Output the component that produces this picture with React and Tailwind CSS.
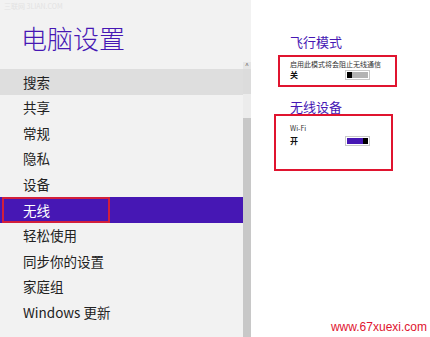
import React from 'react';

const menuItems = ['搜索', '共享', '常规', '隐私', '设备', '无线', '轻松使用', '同步你的设置', '家庭组', 'Windows 更新'];

const font = { fontFamily: '"Noto Sans CJK SC", "Noto Sans", sans-serif' };

const Toggle = ({ on }) => (
  <div className="flex h-[10px] w-[25px] border border-[#c9c9c9] bg-white p-[1px]">
    {on ? (
      <>
        <div className="flex-1 bg-[#4617b4]" />
        <div className="w-[5px] bg-black" />
      </>
    ) : (
      <>
        <div className="w-[5px] bg-black" />
        <div className="flex-1 bg-[#b3b3b3]" />
      </>
    )}
  </div>
);

const App = () => {
  return (
    <div className="flex h-[337px] w-[430px] overflow-hidden bg-white" style={font}>
      <div className="flex w-[251px] bg-[#f2f2f2]">
        <div className="flex w-[243px] flex-col">
          <div className="h-[23px] pl-[4px] pt-[2px] text-[7px] leading-[9px] text-[#e2e2e2]">三联网 3LIAN.COM</div>
          <h1 className="pl-[21px] text-[26px] font-light leading-[30px] text-[#4617b4]">电脑设置</h1>
          <div className="h-[16px]" />
          {menuItems.map((item) => {
            const selected = item === '无线';
            const hover = item === '搜索';
            return (
              <div
                key={item}
                className={`relative flex h-[25.6px] items-center pl-[23px] text-[13.5px] ${
                  selected ? 'bg-[#4617b4] text-white' : hover ? 'bg-[#dedede] text-[#222]' : 'text-[#222]'
                }`}
              >
                {item}
                {selected && (
                  <div className="absolute left-[2px] top-0 h-full w-[108px] border-2 border-[#d21f3c]" />
                )}
              </div>
            );
          })}
        </div>
        <div className="flex w-[8px] flex-col">
          <div className="h-[62px]" />
          <div className="flex h-[7px] items-start justify-center bg-[#e6e6e6] text-[7px] leading-[7px] text-[#666]">^</div>
          <div className="h-[25px] bg-[#dcdcdc]" />
          <div className="h-[24px] bg-[#ececec]" />
          <div className="flex-1 bg-[#c8c8c8]" />
        </div>
      </div>
      <div className="relative flex flex-1 flex-col pl-[27px]">
        <h2 className="pl-[12px] pt-[33px] text-[13px] leading-[18px] text-[#4617b4]">飞行模式</h2>
        <div className="mt-[4px] flex h-[32px] w-[119px] flex-col border-2 border-[#e0142f] pl-[10px] pt-[2px]">
          <div className="text-[7px] leading-[10px] text-[#333]">启用此模式将会阻止无线通信</div>
          <div className="flex items-center">
            <span className="w-[55px] text-[8px] font-bold leading-[12px] text-[#111]">关</span>
            <Toggle on={false} />
          </div>
        </div>
        <h2 className="pl-[12px] pt-[11px] text-[13px] leading-[18px] text-[#4617b4]">无线设备</h2>
        <div className="ml-[-4px] mt-[-2px] flex h-[57px] w-[119px] flex-col border-2 border-[#e0142f] pl-[14px] pt-[7px]">
          <div className="text-[7px] leading-[10px] text-[#333]">Wi-Fi</div>
          <div className="mt-[2px] flex items-center">
            <span className="w-[55px] text-[8px] font-bold leading-[12px] text-[#111]">开</span>
            <Toggle on />
          </div>
        </div>
        <div className="mt-auto self-end pb-[3px] pr-[3px] text-[12px] leading-[14px] text-[#e0142f]" style={{ fontFamily: '"Liberation Sans", sans-serif' }}>
          www.67xuexi.com
        </div>
      </div>
    </div>
  );
};

export default App;
